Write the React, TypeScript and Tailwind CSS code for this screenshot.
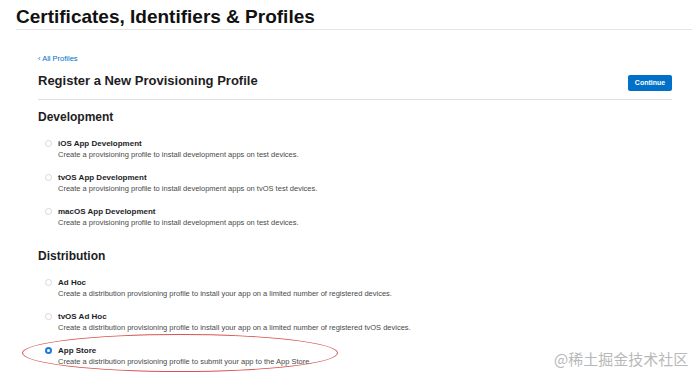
import React from "react"

type Option = { title: string; desc: string; selected?: boolean }

const development: Option[] = [
    { title: "iOS App Development", desc: "Create a provisioning profile to install development apps on test devices." },
    { title: "tvOS App Development", desc: "Create a provisioning profile to install development apps on tvOS test devices." },
    { title: "macOS App Development", desc: "Create a provisioning profile to install development apps on test devices." },
]

const distribution: Option[] = [
    { title: "Ad Hoc", desc: "Create a distribution provisioning profile to install your app on a limited number of registered devices." },
    { title: "tvOS Ad Hoc", desc: "Create a distribution provisioning profile to install your app on a limited number of registered tvOS devices." },
    { title: "App Store", desc: "Create a distribution provisioning profile to submit your app to the App Store.", selected: true },
    { title: "tvOS App Store", desc: "Create a distribution provisioning profile to submit your tvOS app to the App Store." },
]

function Radio({ selected }: { selected?: boolean }) {
    if (selected) {
        return (
            <span className="mt-[2px] flex h-[7px] w-[7px] items-center justify-center rounded-full bg-[#1a7ae0]">
                <span className="h-[3px] w-[3px] rounded-full bg-white" />
            </span>
        )
    }
    return <span className="mt-[2px] h-[7px] w-[7px] rounded-full border border-[#d8d8d8] bg-white" />
}

function OptionRow({ opt }: { opt: Option }) {
    return (
        <div className="flex h-[34px] items-start">
            <div className="flex w-[20px] justify-center pl-[1px]">
                <Radio selected={opt.selected} />
            </div>
            <div className="flex flex-col">
                <span className="text-[8px] leading-[11px] font-bold text-[#1d1d1f]">{opt.title}</span>
                <span className="text-[7.5px] leading-[11px] text-[#4a4a4a]">{opt.desc}</span>
            </div>
        </div>
    )
}

export default function App() {
    return (
        <div className="relative h-[381px] w-[700px] overflow-hidden bg-white font-['Liberation_Sans',Arial,sans-serif]">
            {/* Header */}
            <div className="mx-4 mr-[8px] border-b border-[#e5e5e5] pt-[6px] pb-[1px]">
                <h1 className="text-[19px] leading-[22px] font-bold text-[#111]">Certificates, Identifiers &amp; Profiles</h1>
            </div>

            {/* Content */}
            <div className="ml-[38px] w-[634px] pt-[24px]">
                <a className="block text-[7.5px] leading-[10px] text-[#0070c9]">‹ All Profiles</a>
                <div className="mt-[7px] flex items-center justify-between border-b border-[#e0e0e0] pb-[8px]">
                    <h2 className="text-[13px] leading-[18px] font-bold text-[#1d1d1f]">Register a New Provisioning Profile</h2>
                    <button className="mt-[4px] h-[16px] w-[44px] rounded-[2px] bg-[#0070c9] text-[7px] font-bold text-white">Continue</button>
                </div>

                <h3 className="mt-[9px] text-[12px] leading-[16px] font-bold text-[#1d1d1f]">Development</h3>
                <div className="mt-[13px]">
                    {development.map((o) => (
                        <OptionRow key={o.title} opt={o} />
                    ))}
                </div>

                <h3 className="mt-[8px] text-[12px] leading-[16px] font-bold text-[#1d1d1f]">Distribution</h3>
                <div className="mt-[13px]">
                    {distribution.map((o) => (
                        <OptionRow key={o.title} opt={o} />
                    ))}
                </div>
            </div>

            {/* red annotation ellipse */}
            <div className="absolute top-[334px] left-[22px] h-[38px] w-[316px] rounded-[50%] border border-[#d9534f]" />

            {/* watermark */}
            <span className="absolute top-[350px] left-[554px] text-[15px] leading-[18px] text-[#b8b8b8] font-['Noto_Sans_CJK_SC',sans-serif]">
                @稀土掘金技术社区
            </span>
        </div>
    )
}
